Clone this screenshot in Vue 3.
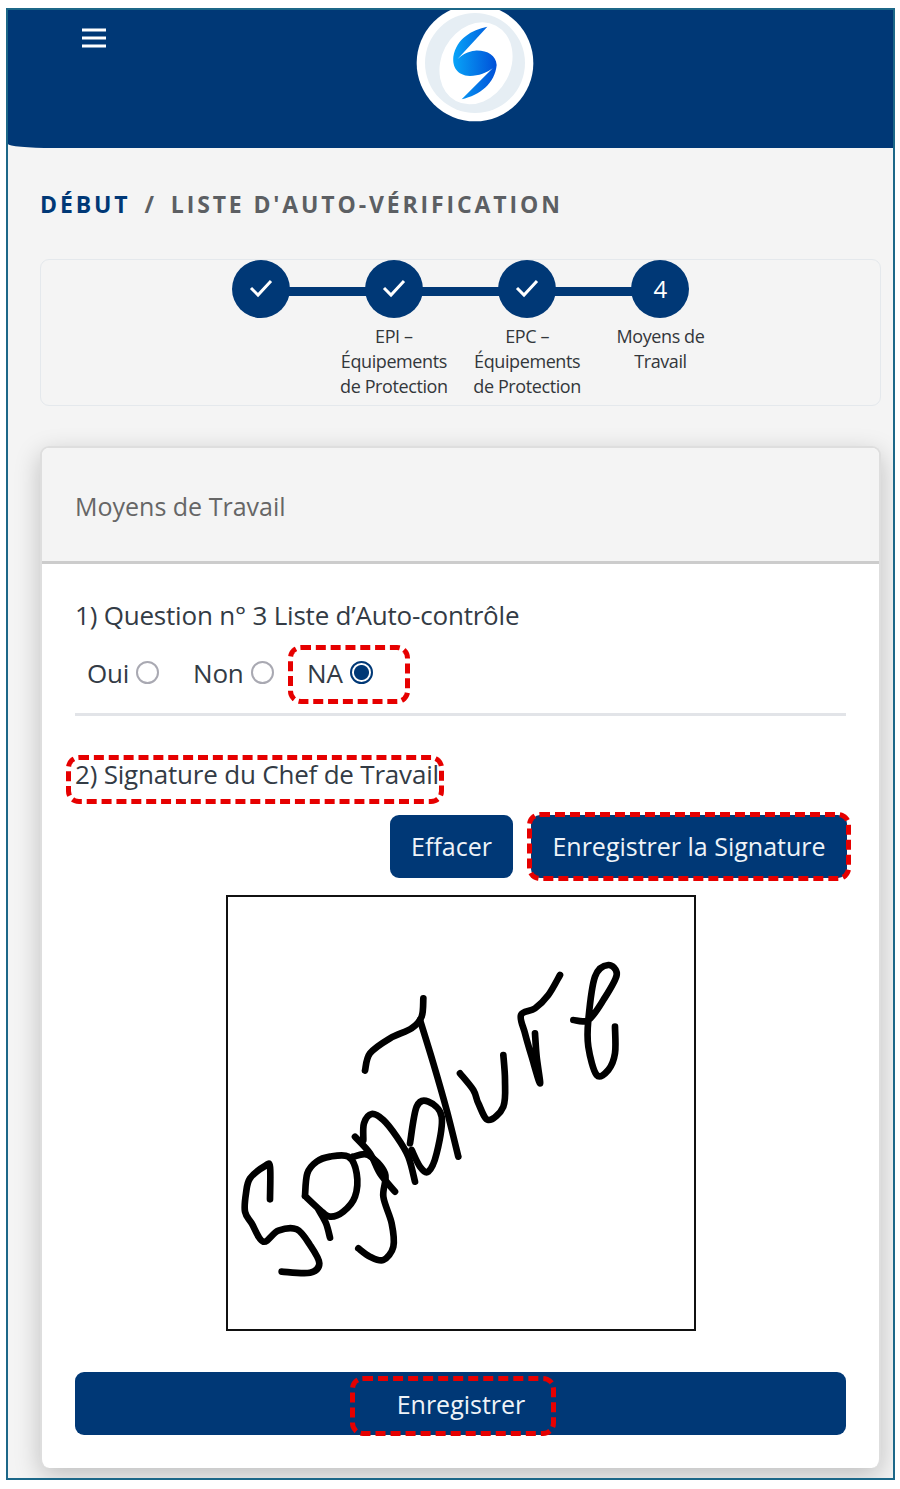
<template>
  <div class="frame">
    <header class="topbar">
      <button class="menu-btn" type="button" aria-label="Menu">
        <svg width="26" height="22" viewBox="0 0 26 22" fill="none" stroke="#fff" stroke-width="3">
          <path d="M1 3h24M1 11h24M1 19h24" />
        </svg>
      </button>
      <!-- logo -->
      <svg class="logo" width="118" height="118" viewBox="0 0 354 354">
        <defs>
          <linearGradient id="boltFill" x1="0" y1="0" x2="1" y2="0">
            <stop offset="0" stop-color="#08a4f8" />
            <stop offset="1" stop-color="#0050d8" />
          </linearGradient>
        </defs>
        <circle cx="177" cy="177" r="175" fill="#fff" />
        <circle cx="177" cy="177" r="150" fill="#e6eef4" />
        <ellipse cx="180" cy="178" rx="104" ry="128" transform="rotate(28 180 178)" fill="#fff" />
        <path
          transform="translate(-48 -12)"
          fill="url(#boltFill)"
          d="M262 80C215 90 170 115 160 170C157 200 170 225 210 228C235 228 262 218 278 205L185 298C240 285 285 250 290 195C288 165 260 150 225 152C205 153 185 165 172 178Z"
        />
      </svg>
    </header>

    <main class="content">
      <nav class="crumbs">
        <a class="crumb-home">DÉBUT</a>
        <span class="crumb-sep">/</span>
        <span class="crumb-page">LISTE D'AUTO-VÉRIFICATION</span>
      </nav>

      <section class="stepper">
        <div v-for="(step, i) in steps" :key="i" class="step">
          <div class="step-dot">
            <svg v-if="step.done" width="24" height="20" viewBox="0 0 24 20" fill="none" stroke="#fff" stroke-width="3">
              <path d="M2 10l7 7L22 3" />
            </svg>
            <span v-else>{{ i + 1 }}</span>
          </div>
          <div class="step-label">{{ step.label }}</div>
        </div>
      </section>

      <section class="card">
        <div class="card-head">Moyens de Travail</div>
        <div class="card-body">
          <p class="question">1) Question n° 3 Liste d’Auto-contrôle</p>
          <div class="choices">
            <label class="choice choice-oui">Oui <input type="radio" name="q3" value="oui" /></label>
            <label class="choice choice-non">Non <input type="radio" name="q3" value="non" /></label>
            <label class="choice choice-na marked">NA <input type="radio" name="q3" value="na" checked /></label>
          </div>
          <hr class="rule" />

          <p class="question sign-title marked">2) Signature du Chef de Travail</p>
          <div class="sign-actions">
            <button class="btn btn-clear" type="button">Effacer</button>
            <span class="save-wrap marked">
              <button class="btn" type="button">Enregistrer la Signature</button>
            </span>
          </div>

          <div class="sign-pad">
            <svg width="466" height="432" viewBox="24 -129 1398 1296" fill="none" stroke="#000" stroke-width="20" stroke-linecap="round" stroke-linejoin="round">
              <path v-for="(d, i) in signaturePaths" :key="i" :d="d" />
            </svg>
          </div>

          <button class="btn btn-full" type="button">
            <span class="submit-label marked">Enregistrer</span>
          </button>
        </div>
      </section>
    </main>
  </div>
</template>

<script setup>
const steps = [
  { label: '', done: true },
  { label: 'EPI – Équipements de Protection', done: true },
  { label: 'EPC – Équipements de Protection', done: true },
  { label: 'Moyens de Travail', done: false }
]

// signature strokes, traced from the pad
const strokes = [
  [[150, 778], [150, 680], [135, 678], [90, 715], [78, 760], [75, 815], [95, 850], [130, 905], [175, 872], [230, 868], [270, 915], [298, 970], [270, 998], [185, 995]],
  [[255, 768], [262, 700], [290, 665], [330, 650], [385, 650], [410, 700], [405, 770], [370, 815], [330, 830], [300, 810], [255, 768]],
  [[296, 810], [318, 850], [330, 893]],
  [[405, 590], [450, 640], [480, 700], [525, 755]],
  [[400, 650], [445, 645], [495, 700], [490, 770], [515, 850], [520, 920], [490, 960], [450, 950], [415, 925]],
  [[430, 600], [432, 550], [455, 522], [490, 540], [530, 590], [565, 650], [585, 725]],
  [[570, 610], [590, 500], [625, 485], [665, 530], [650, 640], [625, 695], [600, 680], [575, 630]],
  [[435, 392], [450, 340], [510, 295], [575, 265], [605, 230], [610, 175]],
  [[600, 240], [640, 370], [680, 510], [715, 650]],
  [[720, 400], [760, 450], [775, 490], [805, 540], [850, 500], [855, 420], [850, 345]],
  [[1020, 105], [985, 165], [945, 205], [903, 225], [915, 280], [935, 350], [960, 430], [950, 350], [945, 280]],
  [[1060, 240], [1105, 240], [1150, 180], [1190, 105], [1165, 75], [1125, 110], [1105, 240], [1105, 320], [1130, 405], [1165, 390], [1185, 340], [1185, 260]]
]

// catmull-rom through the points, so the line stays soft
const smooth = (pts) => {
  let d = `M${pts[0][0]} ${pts[0][1]}`
  for (let i = 0; i < pts.length - 1; i++) {
    const p0 = pts[i - 1] || pts[i]
    const p1 = pts[i]
    const p2 = pts[i + 1]
    const p3 = pts[i + 2] || p2
    const c1x = p1[0] + (p2[0] - p0[0]) / 6
    const c1y = p1[1] + (p2[1] - p0[1]) / 6
    const c2x = p2[0] - (p3[0] - p1[0]) / 6
    const c2y = p2[1] - (p3[1] - p1[1]) / 6
    d += `C${c1x} ${c1y} ${c2x} ${c2y} ${p2[0]} ${p2[1]}`
  }
  return d
}

const signaturePaths = strokes.map(smooth)
</script>

<style>
html,
body {
  margin: 0;
  background: #fff;
}
</style>

<style scoped>
.frame {
  box-sizing: border-box;
  width: 889px;
  height: 1472px;
  margin: 8px 0 0 6px;
  border: 2px solid #1c6788;
  background: #f4f4f4;
  overflow: hidden;
  font-family: "Open Sans", "Noto Sans", sans-serif;
}

.topbar {
  position: relative;
  height: 138px;
  background: #003876;
  border-bottom-left-radius: 45px 4px;
  overflow: hidden;
}

.menu-btn {
  position: absolute;
  left: 73px;
  top: 17px;
  padding: 0;
  border: 0;
  background: none;
  line-height: 0;
}

.logo {
  position: absolute;
  left: 408px;
  top: -6px;
}

.content {
  padding: 41px 12px 0 32px;
}

/* breadcrumb */
.crumbs {
  display: flex;
  gap: 14px;
  height: 30px;
  align-items: center;
  font-size: 23px;
  font-weight: 700;
  letter-spacing: 2.87px;
}

.crumb-home {
  color: #003876;
}

.crumb-sep,
.crumb-page {
  color: #5c5f63;
}

/* stepper */
.stepper {
  display: flex;
  justify-content: center;
  box-sizing: border-box;
  height: 147px;
  margin-top: 40px;
  border: 1px solid #e4e8ec;
  border-radius: 9px;
}

.step {
  position: relative;
  width: 133.3px;
  text-align: center;
}

.step:not(:last-child)::after {
  content: "";
  position: absolute;
  left: 50%;
  top: 27px;
  width: 100%;
  height: 9px;
  background: #003876;
}

.step-dot {
  position: relative;
  z-index: 1;
  box-sizing: border-box;
  display: flex;
  align-items: center;
  justify-content: center;
  width: 58px;
  height: 58px;
  margin: 0 auto;
  padding-bottom: 2px;
  border-radius: 50%;
  background: #003876;
  color: #fff;
  font-size: 24px;
}

.step-label {
  width: 118px;
  margin: 6px auto 0;
  font-size: 18px;
  line-height: 25px;
  letter-spacing: -0.4px;
  color: #33373b;
}

/* card */
.card {
  margin-top: 40px;
  height: 1022px;
  box-sizing: border-box;
  border: 2px solid #dedede;
  border-bottom: 0;
  border-radius: 9px;
  background: #fff;
  box-shadow: 0 8px 26px rgba(0, 0, 0, 0.22);
  overflow: hidden;
}

.card-head {
  box-sizing: border-box;
  height: 116px;
  padding-left: 33px;
  line-height: 117px;
  font-size: 25px;
  color: #666;
  background: #f4f4f4;
  border-bottom: 3px solid #ccc;
}

.card-body {
  padding: 34px 33px 0;
}

.question {
  margin: 0;
  font-size: 26px;
  line-height: 34px;
  letter-spacing: -0.2px;
  color: #333b45;
}

/* red dashed call-outs lie over whatever they surround */
.marked {
  position: relative;
  box-sizing: border-box;
}

.marked::after {
  content: "";
  position: absolute;
  inset: 0;
  border: 5px dashed #e60000;
  border-radius: 13px;
  pointer-events: none;
}

.choices {
  display: flex;
  align-items: center;
  height: 59px;
  margin-top: 13px;
  font-size: 26px;
  letter-spacing: -0.2px;
  color: #333b45;
}

.choice {
  display: flex;
  align-items: center;
  gap: 7px;
}

.choice-oui {
  margin: -4px 0 0 12px;
  width: 106px;
}

.choice-non {
  margin-top: -4px;
  width: 95px;
}

.choice-na {
  width: 122px;
  height: 59px;
  padding: 0 0 4px 19px;
}

.choice input {
  appearance: none;
  box-sizing: border-box;
  width: 23px;
  height: 23px;
  margin: 0;
  border: 2px solid #a9a9b2;
  border-radius: 50%;
  background: #fff;
}

.choice input:checked {
  border-color: #003876;
  background: radial-gradient(circle, #003876 0 7px, #fff 8px);
}

.rule {
  height: 3px;
  margin: 9px 0 0;
  border: 0;
  background: #e2e4e8;
}

.sign-title {
  width: 378px;
  height: 49px;
  margin: 39px 0 0 -9px;
  padding-left: 9px;
  line-height: 39px;
  white-space: nowrap;
}

.sign-actions {
  display: flex;
  justify-content: flex-end;
  align-items: center;
  gap: 14px;
  margin: 8px -5px 0 0;
}

.save-wrap {
  display: flex;
  height: 69px;
  align-items: center;
  justify-content: center;
  width: 324px;
}

.btn {
  height: 63px;
  padding: 0 0 2px;
  border: 0;
  border-radius: 9px;
  background: #003876;
  color: #eef3f8;
  font-family: inherit;
  font-size: 25px;
  white-space: nowrap;
}

.btn-clear {
  width: 123px;
}

.save-wrap .btn {
  width: 316px;
}

.sign-pad {
  box-sizing: border-box;
  width: 470px;
  height: 436px;
  margin: 14px 0 0 151px;
  border: 2px solid #111;
  background: #fff;
  line-height: 0;
}

.btn-full {
  display: flex;
  justify-content: center;
  align-items: flex-start;
  width: 100%;
  margin-top: 41px;
  padding: 4px 0 0;
}

.submit-label {
  display: block;
  box-sizing: border-box;
  width: 206px;
  height: 60px;
  margin-right: 15px;
  padding-left: 16px;
  line-height: 56px;
  text-align: center;
}
</style>
